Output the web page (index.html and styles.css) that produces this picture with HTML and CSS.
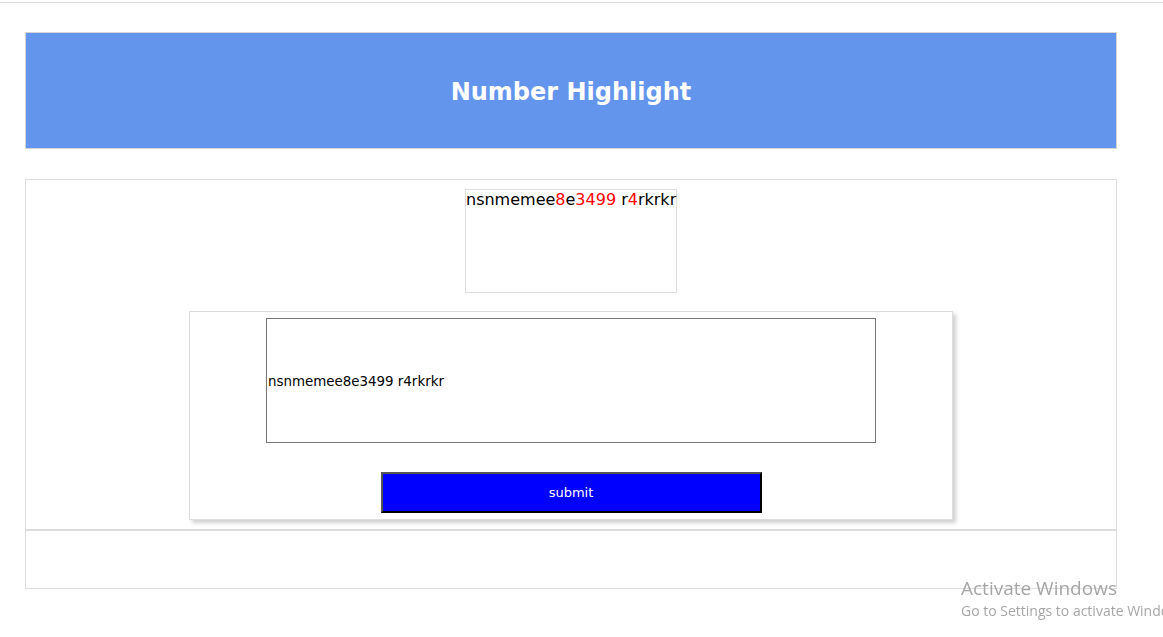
FILE: index.html
```html
<!DOCTYPE html>
<html lang="en">
<head>
<meta charset="utf-8">
<title>Number Highlight</title>
<link rel="stylesheet" href="styles.css">
</head>
<body>
<div class="topline"></div>
<div class="page">
  <header class="banner">
    <h1 class="title">Number Highlight</h1>
  </header>
  <main class="panel">
    <div class="output">nsnmemee<span class="num">8</span>e<span class="num">3499</span> r<span class="num">4</span>rkrkr</div>
    <form class="card">
      <input class="field" type="text" value="nsnmemee8e3499 r4rkrkr">
      <button class="submit" type="button">submit</button>
    </form>
  </main>
  <div class="footer-box"></div>
</div>
<div class="watermark">
  <div class="wm-title">Activate Windows</div>
  <div class="wm-sub">Go to Settings to activate Windows.</div>
</div>
</body>
</html>
```
FILE: styles.css
```css
html, body {
  margin: 0;
  padding: 0;
  background: #fff;
  font-family: Verdana, "DejaVu Sans", sans-serif;
  overflow: hidden;
}

.topline {
  margin-top: 2px;
  border-top: 1px solid #dcdcdc;
}

.page {
  width: 1092px;
  margin-left: 25px;
  padding-top: 29px;
}

.banner {
  box-sizing: border-box;
  height: 117px;
  background: #6495ed;
  border: 1px solid #d4d4d4;
  display: flex;
  align-items: center;
  justify-content: center;
}

.title {
  margin: 0;
  color: #fff;
  font-size: 24px;
  font-weight: bold;
  padding-top: 3px;
}

.panel {
  display: block;
  margin-top: 30px;
  border: 1px solid #dddddd;
  padding: 9px 0;
}

.output {
  box-sizing: border-box;
  width: 212px;
  height: 104px;
  margin: 0 auto;
  border: 1px solid #dddddd;
  font-size: 16px;
  line-height: 19px;
  color: #000;
  white-space: nowrap;
  overflow: visible;
}

.num {
  color: #ff0000;
}

.card {
  box-sizing: border-box;
  width: 764px;
  margin: 18px auto 0;
  padding: 6px 0;
  border: 1px solid #dddddd;
  box-shadow: 3px 3px 4px #d0d0d0;
  background: #fff;
}

.field {
  display: block;
  box-sizing: border-box;
  width: 610px;
  height: 125px;
  margin: 0 auto;
  padding: 2px 1px 0;
  border: 1px solid #767676;
  font-family: Verdana, "DejaVu Sans", sans-serif;
  font-size: 13.4px;
  color: #000;
  background: #fff;
  outline: none;
}

.submit {
  display: block;
  box-sizing: border-box;
  width: 381px;
  height: 41px;
  margin: 29px auto 0;
  background: #0000ff;
  color: #fff;
  font-family: Verdana, "DejaVu Sans", sans-serif;
  font-size: 13px;
  border-style: solid;
  border-width: 2px;
  border-color: #555 #000 #000 #555;
  padding: 0;
}

.footer-box {
  box-sizing: border-box;
  height: 59px;
  border: 1px solid #dddddd;
}

.watermark {
  position: fixed;
  left: 961px;
  top: 576px;
  color: #a6a6a6;
  font-family: "Open Sans", "Noto Sans", sans-serif;
  white-space: nowrap;
}

.wm-title {
  font-size: 19px;
  line-height: 25px;
}

.wm-sub {
  font-size: 14px;
  line-height: 20px;
}
```
